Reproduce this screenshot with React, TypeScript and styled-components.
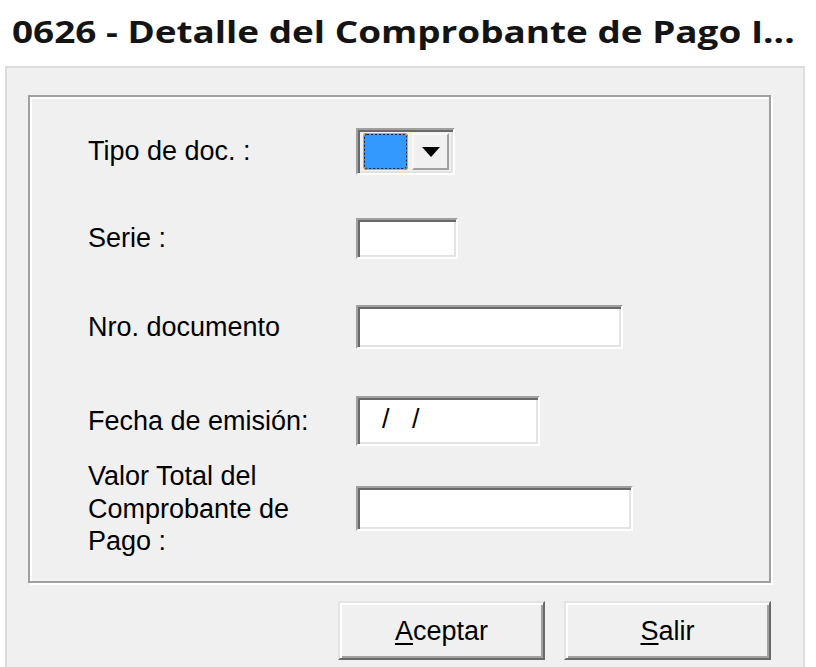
import React from "react";
import styled, { createGlobalStyle } from "styled-components";

const Global = createGlobalStyle`
  html, body { margin: 0; padding: 0; background: #ffffff; }
  body { width: 816px; height: 667px; overflow: hidden; }
`;

const Page = styled.div`
  width: 816px;
  height: 667px;
  display: flex;
  flex-direction: column;
  overflow: hidden;
`;

const TitleBar = styled.div`
  height: 66px;
  display: flex;
  align-items: center;
  padding-left: 12px;
  padding-bottom: 5px;
  box-sizing: border-box;
`;

const TitleText = styled.span`
  display: inline-block;
  font-family: "Open Sans", "Noto Sans", sans-serif;
  font-weight: 700;
  font-size: 31px;
  color: #141414;
  white-space: nowrap;
  transform: scaleX(1.19);
  transform-origin: left center;
`;

const Panel = styled.div`
  margin-left: 5px;
  width: 800px;
  flex: 1;
  box-sizing: border-box;
  background: #f0f0f0;
  border: 2px solid #dcdcdc;
  border-bottom: none;
  padding: 27px 32px 0 21px;
  display: flex;
  flex-direction: column;
`;

const Group = styled.div`
  height: 488px;
  box-sizing: border-box;
  border: 2px solid #a0a0a0;
  box-shadow: inset 2px 2px 0 #ffffff, 2px 2px 0 #ffffff;
  padding: 14px 0 0 58px;
  display: flex;
  flex-direction: column;
`;

const Row = styled.div<{ $mt: number }>`
  height: 80px;
  margin-top: ${(p) => p.$mt}px;
  display: grid;
  grid-template-columns: 268px auto;
  align-items: center;
`;

const Label = styled.div`
  font-family: "Liberation Sans", Arial, sans-serif;
  font-size: 27px;
  line-height: 32.5px;
  color: #000;
`;

const Sunken = styled.div<{ $w: number; $h: number }>`
  width: ${(p) => p.$w}px;
  height: ${(p) => p.$h}px;
  box-sizing: border-box;
  border: 2px solid;
  border-color: #a0a0a0 #ffffff #ffffff #a0a0a0;
  box-shadow: inset 2px 2px 0 #696969, inset -2px -2px 0 #e3e3e3;
  background: #ffffff;
`;

const DateText = styled.div`
  font-family: "Liberation Sans", Arial, sans-serif;
  font-size: 27px;
  white-space: pre;
  padding: 6px 0 0 24px;
  color: #000;
`;

const Combo = styled(Sunken)`
  background: #f0f0f0;
  display: flex;
  align-items: center;
  padding: 4px 4px 3px 5px;
  gap: 4px;
`;

const Swatch = styled.div`
  width: 45px;
  height: 37px;
  box-sizing: border-box;
  background: #3399ff;
  border: 2px dotted #1a1a1a;
  outline: 1px solid #f0a040;
  outline-offset: -1px;
  border-radius: 4px;
`;

const DropBtn = styled.div`
  flex: 1;
  height: 37px;
  box-sizing: border-box;
  background: #f0f0f0;
  border: 2px solid;
  border-color: #f7f7f7 #a0a0a0 #a0a0a0 #f7f7f7;
  display: flex;
  align-items: center;
  justify-content: center;
`;

const Buttons = styled.div`
  display: flex;
  justify-content: flex-end;
  gap: 19px;
  margin-top: 18px;
`;

const Button = styled.div`
  width: 207px;
  height: 59px;
  box-sizing: border-box;
  background: #f0f0f0;
  border: 2px solid;
  border-color: #e3e3e3 #696969 #696969 #e3e3e3;
  box-shadow: inset 2px 2px 0 #ffffff, inset -2px -2px 0 #a0a0a0;
  display: flex;
  align-items: center;
  justify-content: center;
  font-family: "Liberation Sans", Arial, sans-serif;
  font-size: 27px;
  color: #000;
  padding-top: 2px;
`;

const Accel = styled.span`
  text-decoration: underline;
  text-underline-offset: 3px;
  text-decoration-thickness: 2px;
`;

export default function App() {
  return (
    <Page>
      <Global />
      <TitleBar>
        <TitleText>0626 - Detalle del Comprobante de Pago I...</TitleText>
      </TitleBar>
      <Panel>
        <Group>
          <Row $mt={0}>
            <Label>Tipo de doc. :</Label>
            <Combo $w={99} $h={47}>
              <Swatch />
              <DropBtn>
                <svg width="18" height="10" viewBox="0 0 18 10">
                  <path d="M0 0 H18 L9 10 Z" fill="#000" />
                </svg>
              </DropBtn>
            </Combo>
          </Row>
          <Row $mt={7}>
            <Label>Serie :</Label>
            <Sunken $w={102} $h={41} />
          </Row>
          <Row $mt={9}>
            <Label>Nro. documento</Label>
            <Sunken $w={267} $h={44} />
          </Row>
          <Row $mt={14}>
            <Label>Fecha de emisión:</Label>
            <Sunken $w={184} $h={50}>
              <DateText>{"/   /"}</DateText>
            </Sunken>
          </Row>
          <Row $mt={-1}>
            <Label>
              Valor Total del
              <br />
              Comprobante de
              <br />
              Pago :
            </Label>
            <Sunken $w={277} $h={45} />
          </Row>
        </Group>
        <Buttons>
          <Button>
            <span>
              <Accel>A</Accel>ceptar
            </span>
          </Button>
          <Button>
            <span>
              <Accel>S</Accel>alir
            </span>
          </Button>
        </Buttons>
      </Panel>
    </Page>
  );
}
